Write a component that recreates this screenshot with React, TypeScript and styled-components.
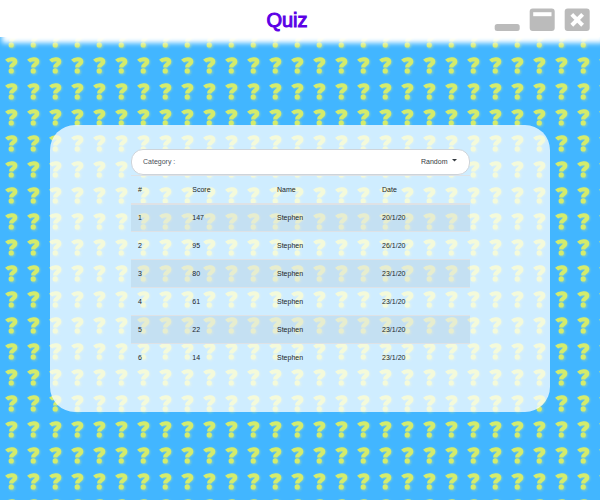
import React from 'react';
import styled, { createGlobalStyle } from 'styled-components';

const tile = `<svg xmlns="http://www.w3.org/2000/svg" width="22" height="26" viewBox="0 0 22 26"><defs><filter id="s" x="-30%" y="-30%" width="170%" height="170%"><feGaussianBlur stdDeviation="0.8"/></filter></defs><g fill="none" stroke="#cfe87a" stroke-width="3.4" opacity=".6" filter="url(#s)"><path d="M8 9.4C10 7.4 16.2 7.4 16.2 10.2C16.2 12.8 12.4 12.6 12.2 15"/><circle cx="12.2" cy="19.8" r="1"/></g><path d="M6.6 9.2C9 6.6 15.2 6.4 15.2 9.7C15.2 12.6 11.2 12 11.2 15.4" fill="none" stroke="#d4ec6c" stroke-width="4.2"/><circle cx="11.2" cy="18.9" r="2.6" fill="#d4ec6c"/></svg>`;

const GlobalStyle = createGlobalStyle`
  *, *::before, *::after { box-sizing: border-box; }
  body {
    margin: 0;
    min-height: 100vh;
    font-family: "Liberation Sans", Arial, sans-serif;
    color: #212529;
    background: #42b6ff url("data:image/svg+xml,${encodeURIComponent(tile)}") 0 0 / 22px 26px;
  }
`;

const TitleBar = styled.header`
  display: grid;
  grid-template-columns: 1fr auto 1fr;
  align-items: center;
  height: 37px;
  padding: 3px 10px 0;
  background: #fff;
  box-shadow: 3px 5px 5px 1px #fff;
`;

const Title = styled.h1`
  grid-column: 2;
  margin: 0;
  padding-right: 26px;
  font-size: 20px;
  line-height: 34px;
  font-weight: 400;
  color: #5b00e6;
  -webkit-text-stroke: 1px #5b00e6;
`;

const WindowControls = styled.div`
  display: flex;
  justify-content: flex-end;
  gap: 9px;
`;

const ControlButton = styled.button`
  padding: 0;
  border: 0;
  background: none;
  line-height: 0;
`;

const Panel = styled.main`
  width: calc(100% - 100px);
  margin: 88px auto 0;
  padding: 24px 80px 40px 81px;
  border-radius: 25px;
  background: rgba(255, 255, 255, 0.75);
`;

const CategoryField = styled.div`
  display: flex;
  align-items: center;
  justify-content: space-between;
  height: 26px;
  padding: 0 12px 2px 11px;
  border: 1px solid #ced4da;
  border-radius: 12px;
  background: #fff;
  font-size: 7px;
  color: #495057;
`;

const SelectWrap = styled.span`
  display: flex;
  align-items: center;
  gap: 4px;
`;

const CategorySelect = styled.select`
  appearance: none;
  padding: 0;
  border: 0;
  background: none;
  font: inherit;
  color: #343a40;
`;

const Scores = styled.table`
  width: 100%;
  border-collapse: collapse;
  table-layout: fixed;
  font-size: 7px;
  line-height: 11px;
`;

const Column = styled.col<{ $share: number }>`
  width: ${({ $share }) => $share}%;
`;

const Cell = styled.td`
  height: 28px;
  padding: 0 7px;
  border-top: 1px solid #dee2e6;
  text-align: left;
  font-weight: 400;
`;

const HeadRow = styled.tr`
  ${Cell} { border-bottom: 2px solid #dee2e6; }
`;

const ScoreRow = styled.tr`
  &:nth-child(odd) { background: rgba(0, 0, 0, 0.05); }
`;

const scores = [
  ['1', '147', 'Stephen', '20/1/20'],
  ['2', '95', 'Stephen', '26/1/20'],
  ['3', '80', 'Stephen', '23/1/20'],
  ['4', '61', 'Stephen', '23/1/20'],
  ['5', '22', 'Stephen', '23/1/20'],
  ['6', '14', 'Stephen', '23/1/20'],
];

export default function App() {
  return (
    <>
      <GlobalStyle />
      <TitleBar>
        <Title>Quiz</Title>
        <WindowControls>
          <ControlButton aria-label="Minimize">
            <svg width="26" height="24" viewBox="0 0 26 24"><rect x="0.7" y="16" width="25" height="7" rx="2.5" fill="#bbb" /></svg>
          </ControlButton>
          <ControlButton aria-label="Maximize">
            <svg width="26" height="24" viewBox="0 0 26 24"><rect x="0.7" y="0.5" width="25" height="22.5" rx="3" fill="#bbb" /><path d="M4.2 4.2H22.5V8.2H4.2Z" fill="#fff" /></svg>
          </ControlButton>
          <ControlButton aria-label="Close">
            <svg width="26" height="24" viewBox="0 0 26 24"><rect x="0.7" y="0.5" width="25" height="22.5" rx="3" fill="#bbb" /><path d="M9.2 7.8L17.2 15.8M17.2 7.8L9.2 15.8" stroke="#fff" strokeWidth="4" strokeLinecap="square" /></svg>
          </ControlButton>
        </WindowControls>
      </TitleBar>
      <Panel>
        <CategoryField>
          <label htmlFor="category">Category :</label>
          <SelectWrap>
            <CategorySelect id="category" defaultValue="Random">
              <option>Random</option>
            </CategorySelect>
            <svg width="5" height="6" viewBox="0 0 5 6"><path d="M0 1H5L2.5 3.5Z" fill="#343a40" /></svg>
          </SelectWrap>
        </CategoryField>
        <Scores>
          <colgroup>
            <Column $share={16} />
            <Column $share={25} />
            <Column $share={31} />
            <Column $share={28} />
          </colgroup>
          <thead>
            <HeadRow>
              {['#', 'Score', 'Name', 'Date'].map((h) => <Cell as="th" scope="col" key={h}>{h}</Cell>)}
            </HeadRow>
          </thead>
          <tbody>
            {scores.map((row) => (
              <ScoreRow key={row[0]}>
                {row.map((value, i) => <Cell key={i}>{value}</Cell>)}
              </ScoreRow>
            ))}
          </tbody>
        </Scores>
      </Panel>
    </>
  );
}
